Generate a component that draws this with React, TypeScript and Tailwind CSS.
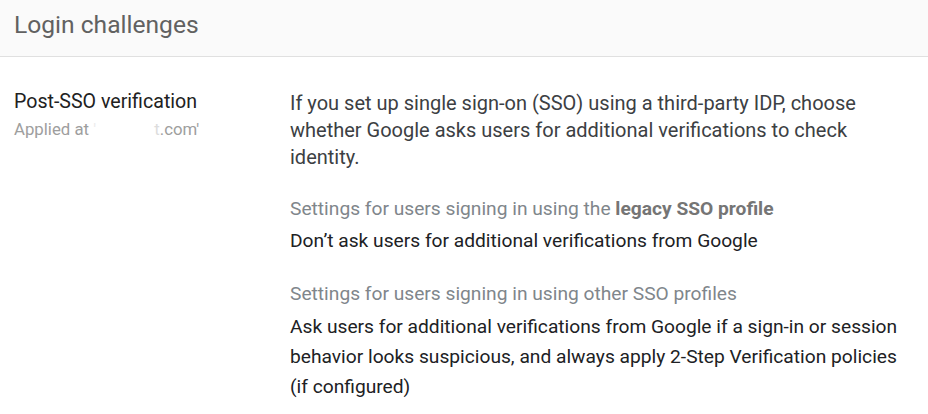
import React from "react";

export default function App() {
  return (
    <div className="w-[928px] h-[414px] bg-white overflow-hidden" style={{ fontFamily: "Roboto, 'Noto Sans', sans-serif" }}>
      <div className="h-[57px] bg-[#fafafa] border-b border-[#e0e0e0] flex items-center px-[14px] pb-[6px]">
        <h1 className="text-[24.6px] text-[#616161] font-normal">Login challenges</h1>
      </div>
      <div className="flex pl-[14px] pt-[33px]">
        <div className="w-[276px] shrink-0">
          <div className="text-[19.6px] leading-[24px] text-[#212121]">Post-SSO verification</div>
          <div className="text-[16.8px] leading-[22px] mt-[4px] text-[#9e9e9e] whitespace-nowrap">
            Applied at <span className="text-[#ececec]">'</span>
            <span className="inline-block w-[58px]" />
            <span className="text-[#dddddd]">t</span>.com'
          </div>
        </div>
        <div className="flex-1">
          <p className="text-[20px] leading-[27px] text-[#3c4043] w-[590px]">
            If you set up single sign-on (SSO) using a third-party IDP, choose whether Google asks users for additional verifications to check identity.
          </p>
          <div className="mt-[22px] text-[19.2px] leading-[32px] text-[#80868b] whitespace-nowrap">
            Settings for users signing in using the <span className="font-bold text-[#757575]">legacy SSO profile</span>
          </div>
          <div className="mt-[1px] text-[19.2px] leading-[30px] text-[#202124] whitespace-nowrap">
            Don’t ask users for additional verifications from Google
          </div>
          <div className="mt-[22px] text-[19.2px] leading-[32px] text-[#80868b] whitespace-nowrap">
            Settings for users signing in using other SSO profiles
          </div>
          <div className="mt-[2px] text-[19.2px] leading-[30px] text-[#202124] w-[620px]">
            Ask users for additional verifications from Google if a sign-in or session behavior looks suspicious, and always apply 2-Step Verification policies (if configured)
          </div>
        </div>
      </div>
    </div>
  );
}
